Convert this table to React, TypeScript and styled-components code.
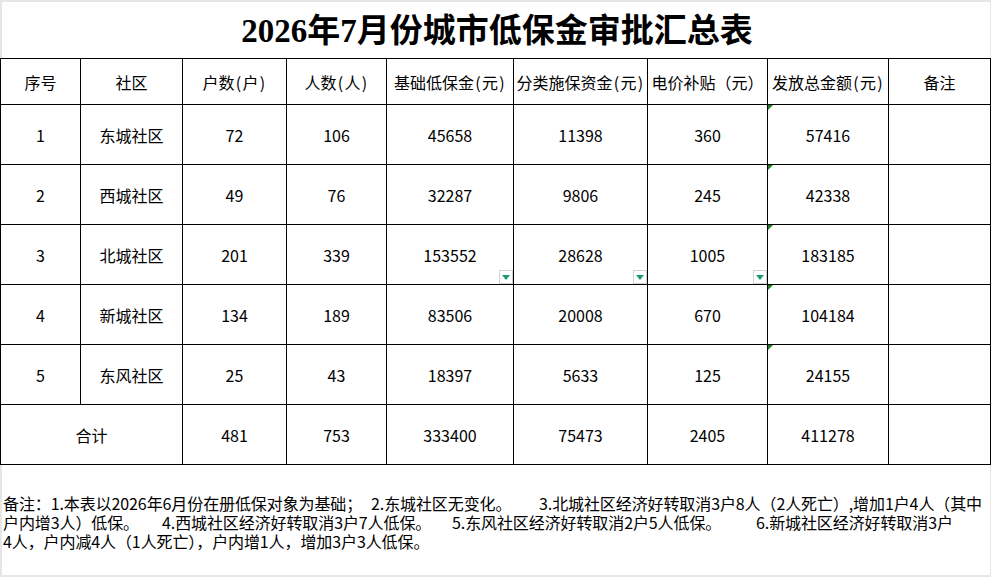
import React from 'react';
import styled, { createGlobalStyle } from 'styled-components';

const GlobalStyle = createGlobalStyle`
  html, body {
    margin: 0;
    padding: 0;
    background: #fff;
  }
  body {
    font-family: "Noto Sans CJK SC", "Liberation Sans", sans-serif;
    color: #000;
  }
`;

type Row = {
  no: string;
  name: string;
  households: number;
  people: number;
  basic: number;
  classified: number;
  power: number;
  total: number;
  dropdown?: boolean;
};

const rows: Row[] = [
  { no: '1', name: '东城社区', households: 72, people: 106, basic: 45658, classified: 11398, power: 360, total: 57416 },
  { no: '2', name: '西城社区', households: 49, people: 76, basic: 32287, classified: 9806, power: 245, total: 42338 },
  { no: '3', name: '北城社区', households: 201, people: 339, basic: 153552, classified: 28628, power: 1005, total: 183185, dropdown: true },
  { no: '4', name: '新城社区', households: 134, people: 189, basic: 83506, classified: 20008, power: 670, total: 104184 },
  { no: '5', name: '东风社区', households: 25, people: 43, basic: 18397, classified: 5633, power: 125, total: 24155 },
];

type Piece = { text: string; w?: number };
const notes: Piece[][] = [
  [
    { text: '备注：1.本表以2026年6月份在册低保对象为基础；', w: 368 },
    { text: '2.东城社区无变化。', w: 168 },
    { text: '3.北城社区经济好转取消3户8人（2人死亡）,增加1户4人（其中' },
  ],
  [
    { text: '户内增3人）低保。', w: 159 },
    { text: '4.西城社区经济好转取消3户7人低保。', w: 290 },
    { text: '5.东风社区经济好转取消2户5人低保。', w: 304 },
    { text: '6.新城社区经济好转取消3户' },
  ],
  [{ text: '4人，户内减4人（1人死亡），户内增1人，增加3户3人低保。' }],
];

function Label({ text, unit, wide }: { text: string; unit: string; wide?: boolean }) {
  if (wide) return <>{`${text}（${unit}）`}</>;
  return (
    <>
      {text}
      <Paren>(</Paren>
      {unit}
      <Paren>)</Paren>
    </>
  );
}

function DropButton() {
  return (
    <Drop>
      <svg width="8" height="5" viewBox="0 0 8 5">
        <path d="M0 0h8L4 5z" fill="#1f9b6d" />
      </svg>
    </Drop>
  );
}

export default function App() {
  return (
    <Sheet>
      <GlobalStyle />
      <Title>2026年7月份城市低保金审批汇总表</Title>

      <Grid>
        <Head>序号</Head>
        <Head>社区</Head>
        <Head><Label text="户数" unit="户" /></Head>
        <Head><Label text="人数" unit="人" /></Head>
        <Head><Label text="基础低保金" unit="元" /></Head>
        <Head><Label text="分类施保资金" unit="元" /></Head>
        <Head><Label text="电价补贴" unit="元" wide /></Head>
        <Head><Label text="发放总金额" unit="元" /></Head>
        <Head>备注</Head>

        {rows.map((r) => (
          <React.Fragment key={r.no}>
            <Cell>{r.no}</Cell>
            <Cell>{r.name}</Cell>
            <Cell>{r.households}</Cell>
            <Cell>{r.people}</Cell>
            <Cell>
              {r.basic}
              {r.dropdown && <DropButton />}
            </Cell>
            <Cell>
              {r.classified}
              {r.dropdown && <DropButton />}
            </Cell>
            <Cell>
              {r.power}
              {r.dropdown && <DropButton />}
            </Cell>
            <Cell>
              <Flag />
              {r.total}
            </Cell>
            <Cell />
          </React.Fragment>
        ))}

        <Cell $span={2}>合计</Cell>
        <Cell>481</Cell>
        <Cell>753</Cell>
        <Cell>333400</Cell>
        <Cell>75473</Cell>
        <Cell>2405</Cell>
        <Cell>411278</Cell>
        <Cell />
      </Grid>

      <Notes>
        {notes.map((line, i) => (
          <NoteLine key={i}>
            {line.map((p, j) => (
              <Seg key={j} $w={p.w}>{p.text}</Seg>
            ))}
          </NoteLine>
        ))}
      </Notes>
    </Sheet>
  );
}

const Sheet = styled.div`
  width: 991px;
  height: 577px;
  display: flex;
  flex-direction: column;
  background: #fff;
  overflow: hidden;
`;

const Title = styled.h1`
  margin: 0;
  height: 58px;
  box-sizing: border-box;
  border: 2px solid #e6e6e6;
  border-bottom: none;
  border-right-width: 1px;
  display: flex;
  align-items: center;
  justify-content: center;
  padding: 3px 0 0 2px;
  font-family: "Liberation Serif", "Noto Sans CJK SC", serif;
  font-weight: bold;
  font-size: 33px;
  line-height: 1;
  color: #000;
`;

const Grid = styled.div`
  display: grid;
  grid-template-columns: 79px 101px 103px 99px 126px 133px 119px 120px 101px;
  grid-template-rows: 45px repeat(6, 59px);
  gap: 1px;
  padding: 1px;
  background: #000;
  font-size: 16px;
`;

const Cell = styled.div<{ $span?: number }>`
  position: relative;
  background: #fff;
  display: flex;
  align-items: center;
  justify-content: center;
  white-space: nowrap;
  padding-top: 1px;
  line-height: 1;
  grid-column: ${(p) => (p.$span ? `span ${p.$span}` : 'auto')};
`;

const Head = styled(Cell)`
  padding-top: 0;
`;

const Paren = styled.span`
  display: inline-block;
  width: 0.5em;
  text-align: center;
`;

const Drop = styled.span`
  position: absolute;
  right: 0;
  bottom: 0;
  width: 14px;
  height: 14px;
  box-sizing: border-box;
  border: 1px solid #d3d3d3;
  background: #fff;
  display: flex;
  align-items: center;
  justify-content: center;
`;

const Flag = styled.span`
  position: absolute;
  top: 0;
  left: 0;
  width: 0;
  height: 0;
  border-top: 5px solid #1f7f1f;
  border-right: 5px solid transparent;
`;

const Notes = styled.div`
  flex: 1;
  border: 2px solid #e6e6e6;
  border-top: none;
  border-right-width: 1px;
  padding: 29px 0 0 1px;
  font-size: 16px;
  line-height: 19px;
`;

const NoteLine = styled.div`
  white-space: nowrap;
  letter-spacing: -0.1px;
`;

const Seg = styled.span<{ $w?: number }>`
  display: inline-block;
  width: ${(p) => (p.$w ? `${p.$w}px` : 'auto')};
`;
